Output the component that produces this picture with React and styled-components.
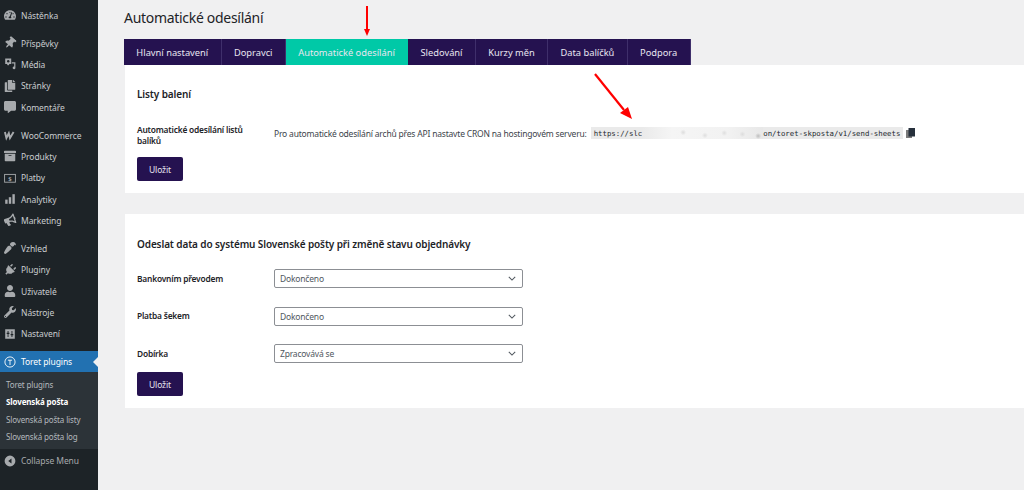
import React from "react";
import styled, { createGlobalStyle } from "styled-components";
import {
  FaTachometerAlt,
  FaThumbtack,
  FaCopy,
  FaCommentAlt,
  FaArchive,
  FaBullhorn,
  FaPaintBrush,
  FaPlug,
  FaUser,
  FaWrench,
} from "react-icons/fa";

const MediaIcon = () => (
  <svg viewBox="0 0 20 20" fill="currentColor">
    <path d="M2 1h10v9H9l-1 2H6l-1-2H2z" />
    <circle cx="7" cy="5.500" r="2" fill="#1d2327" />
    <path d="M13 7h6v9.500a2.300 2.300 0 1 1-2-2.300V9h-4z" />
  </svg>
);

const WooIcon = () => (
  <svg viewBox="0 0 20 20" fill="none" stroke="currentColor" strokeWidth="3.200">
    <path d="M1.500 5l2.500 10 4-8 2 8 6-10" />
  </svg>
);

const PayIcon = () => (
  <svg viewBox="0 0 20 20" fill="none">
    <rect x="1" y="4" width="18" height="13" stroke="currentColor" strokeWidth="1.500" />
    <text x="10" y="14.500" fontSize="10" fontFamily="Noto Sans" fontWeight="700" fill="currentColor" textAnchor="middle">$</text>
  </svg>
);

const BarsIcon = () => (
  <svg viewBox="0 0 20 20" fill="currentColor">
    <rect x="2" y="11" width="4" height="7" />
    <rect x="8" y="7" width="4" height="11" />
    <rect x="14" y="2" width="4" height="16" />
  </svg>
);

const SlidersIcon = () => (
  <svg viewBox="0 0 20 20" fill="currentColor">
    <path fillRule="evenodd" d="M2 2h16v16H2zM6 5v3H4.500v2H6v5h1.500v-5H9V8H7.500V5zM12.500 5v5H11v2h1.500v3H14v-3h1.500v-2H14V5z" />
  </svg>
);

const ToretIcon = () => (
  <svg viewBox="0 0 20 20" fill="none" stroke="#fff" strokeWidth="1.500">
    <circle cx="10" cy="10" r="8.500" />
    <path d="M6.500 7h7M10 7v8" />
  </svg>
);

const CollapseIcon = () => (
  <svg viewBox="0 0 20 20" fill="currentColor">
    <path fillRule="evenodd" d="M10 1a9 9 0 1 1 0 18 9 9 0 0 1 0-18zM12.500 6L7 10l5.500 4z" />
  </svg>
);

const CopyIcon = () => (
  <svg viewBox="0 0 9 10" width="9" height="10">
    <rect x="0" y="2" width="6" height="8" fill="#7b7b7b" />
    <rect x="2.500" y="0" width="6.500" height="8.500" fill="#27303c" />
  </svg>
);

const menuGroups = [
  [{ label: "Nástěnka", icon: <FaTachometerAlt /> }],
  [
    { label: "Příspěvky", icon: <FaThumbtack style={{ transform: "rotate(40deg)" }} /> },
    { label: "Média", icon: <MediaIcon /> },
    { label: "Stránky", icon: <FaCopy /> },
    { label: "Komentáře", icon: <FaCommentAlt /> },
  ],
  [
    { label: "WooCommerce", icon: <WooIcon /> },
    { label: "Produkty", icon: <FaArchive /> },
    { label: "Platby", icon: <PayIcon /> },
    { label: "Analytiky", icon: <BarsIcon /> },
    { label: "Marketing", icon: <FaBullhorn style={{ transform: "rotate(-18deg)" }} /> },
  ],
  [
    { label: "Vzhled", icon: <FaPaintBrush style={{ transform: "rotate(180deg)" }} /> },
    { label: "Pluginy", icon: <FaPlug style={{ transform: "rotate(45deg)" }} /> },
    { label: "Uživatelé", icon: <FaUser /> },
    { label: "Nástroje", icon: <FaWrench /> },
    { label: "Nastavení", icon: <SlidersIcon /> },
  ],
];

const tabs = [
  "Hlavní nastavení",
  "Dopravci",
  "Automatické odesílání",
  "Sledování",
  "Kurzy měn",
  "Data balíčků",
  "Podpora",
];

const statusRows = [
  { label: "Bankovním převodem", value: "Dokončeno" },
  { label: "Platba šekem", value: "Dokončeno" },
  { label: "Dobírka", value: "Zpracovává se" },
];

function App() {
  return (
    <>
      <GlobalStyle />
      <Page>
        <Sidebar>
          {menuGroups.map((group, i) => (
            <MenuGroup key={i}>
              {group.map((item) => (
                <MenuItem key={item.label}>
                  <MenuIcon>{item.icon}</MenuIcon>
                  {item.label}
                </MenuItem>
              ))}
            </MenuGroup>
          ))}
          <CurrentItem>
            <MenuIcon>
              <ToretIcon />
            </MenuIcon>
            Toret plugins
          </CurrentItem>
          <Submenu>
            <SubItem>Toret plugins</SubItem>
            <SubItem $active>Slovenská pošta</SubItem>
            <SubItem>Slovenská pošta listy</SubItem>
            <SubItem>Slovenská pošta log</SubItem>
          </Submenu>
          <CollapseRow>
            <MenuIcon>
              <CollapseIcon />
            </MenuIcon>
            Collapse Menu
          </CollapseRow>
        </Sidebar>

        <Content>
          <Title>Automatické odesílání</Title>
          <TabBar>
            {tabs.map((tab) => (
              <Tab key={tab} $active={tab === "Automatické odesílání"}>
                {tab}
              </Tab>
            ))}
          </TabBar>

          <FirstCard>
            <CardTitle>Listy balení</CardTitle>
            <CronRow>
              <CronLabel>Automatické odesílání listů balíků</CronLabel>
              <CronText>
                Pro automatické odesílání archů přes API nastavte CRON na hostingovém serveru:
              </CronText>
              <UrlCode>
                https://slc
                <Blurred />
                on/toret-skposta/v1/send-sheets
              </UrlCode>
              <CopyButton>
                <CopyIcon />
              </CopyButton>
            </CronRow>
            <SaveButton>Uložit</SaveButton>
          </FirstCard>

          <SecondCard>
            <WideTitle>Odeslat data do systému Slovenské pošty při změně stavu objednávky</WideTitle>
            {statusRows.map((row) => (
              <FormRow key={row.label}>
                <RowLabel>{row.label}</RowLabel>
                <SelectBox>
                  {row.value}
                  <svg width="8" height="5" viewBox="0 0 10 6" fill="none" stroke="#50575e" strokeWidth="1.300">
                    <path d="M1 1l4 4 4-4" />
                  </svg>
                </SelectBox>
              </FormRow>
            ))}
            <SaveButton>Uložit</SaveButton>
          </SecondCard>
        </Content>

        <TopArrow viewBox="0 0 6 30" width="6" height="30">
          <path d="M3 0v24" stroke="#f00" strokeWidth="2" />
          <path d="M0 23h6L3 30z" fill="#f00" />
        </TopArrow>
        <UrlArrow viewBox="0 0 40 48" width="40" height="48">
          <path d="M1 1l29 36" stroke="#f00" strokeWidth="2.200" />
          <path d="M26 40l8-6 4 12z" fill="#f00" />
        </UrlArrow>
      </Page>
    </>
  );
}

export default App;

const GlobalStyle = createGlobalStyle`
  html, body {
    margin: 0;
    padding: 0;
    background: #f0f0f1;
  }
  * {
    box-sizing: border-box;
  }
`;

const Page = styled.div`
  position: relative;
  width: 1024px;
  height: 490px;
  display: flex;
  overflow: hidden;
  background: #f0f0f1;
  font-family: "Noto Sans", "Open Sans", sans-serif;
  color: #3c434a;
`;

const Sidebar = styled.nav`
  width: 98px;
  flex: none;
  background: #1d2327;
  padding-top: 4.500px;
  font-size: 8.500px;
  letter-spacing: -0.08px;
`;

const MenuGroup = styled.div`
  margin-bottom: 6.670px;
`;

const MenuItem = styled.div`
  height: 21.330px;
  display: flex;
  align-items: center;
  color: #c9cccf;
  white-space: nowrap;
`;

const MenuIcon = styled.span`
  width: 21px;
  padding-left: 4px;
  flex: none;
  display: flex;
  align-items: center;
  color: #a7aaad;

  svg {
    width: 12px;
    height: 12px;
  }
`;

const CurrentItem = styled(MenuItem)`
  position: relative;
  background: #2271b1;
  color: #fff;

  &::after {
    content: "";
    position: absolute;
    right: 0;
    top: 6px;
    border: 5px solid transparent;
    border-right-color: #f0f0f1;
    border-left: 0;
  }
`;

const Submenu = styled.div`
  background: #2c3338;
  height: 77px;
  padding-top: 3px;
`;

const SubItem = styled.div`
  height: 17.600px;
  padding-left: 6px;
  display: flex;
  align-items: center;
  font-size: 8px;
  letter-spacing: -0.14px;
  white-space: nowrap;
  color: ${(p) => (p.$active ? "#fff" : "#b4b9be")};
  font-weight: ${(p) => (p.$active ? 700 : 400)};
`;

const CollapseRow = styled(MenuItem)`
  color: #a7aaad;
  padding-top: 1px;
`;

const Content = styled.main`
  flex: 1;
  min-width: 0;
  padding: 8px 0 0 26px;
`;

const Title = styled.h1`
  margin: 0 0 11px;
  height: 20px;
  font-size: 14px;
  line-height: 20px;
  letter-spacing: -0.3px;
  font-weight: 400;
  color: #1d2327;
`;

const TabBar = styled.div`
  display: flex;
  height: 26px;
`;

const Tab = styled.div`
  padding: 0 12.350px;
  display: flex;
  align-items: center;
  font-size: 9.300px;
  white-space: nowrap;
  color: #e8e6f0;
  background: ${(p) => (p.$active ? "#00c9a7" : "#251250")};
  border-right: 1px solid ${(p) => (p.$active ? "#00c9a7" : "#3f2f6b")};
`;

const Card = styled.section`
  margin-left: 1px;
  background: #fff;
  padding: 0 12px;
`;

const FirstCard = styled(Card)`
  height: 128px;
  padding-top: 21px;
  margin-bottom: 21px;
`;

const SecondCard = styled(Card)`
  height: 194px;
  padding-top: 22px;
`;

const CardTitle = styled.h2`
  margin: 0;
  height: 16px;
  line-height: 16px;
  font-size: 10px;
  letter-spacing: -0.12px;
  font-weight: 600;
  color: #1d2327;
`;

const WideTitle = styled(CardTitle)`
  margin-bottom: 17px;
`;

const CronRow = styled.div`
  display: flex;
  align-items: center;
  margin: 16px 0 9px;
  min-height: 30px;
`;

const RowLabel = styled.div`
  width: 137px;
  flex: none;
  font-size: 8.400px;
  letter-spacing: -0.2px;
  line-height: 11.500px;
  font-weight: 600;
  color: #1d2327;
`;

const CronLabel = styled(RowLabel)`
  padding: 4px 20px 0 0;
`;

const CronText = styled.span`
  font-size: 8.500px;
  letter-spacing: -0.19px;
  color: #3c434a;
  white-space: nowrap;
`;

const UrlCode = styled.code`
  display: inline-flex;
  align-items: center;
  height: 12px;
  margin-left: 4px;
  padding: 0 3px;
  background: #eaeaea;
  font-family: "DejaVu Sans Mono", "Liberation Mono", monospace;
  font-size: 7.350px;
  color: #23282d;
  white-space: nowrap;
`;

const Blurred = styled.span`
  display: inline-block;
  width: 121px;
  height: 12px;
  background:
    radial-gradient(circle at 34% 45%, #dcdcdc, transparent 3px),
    radial-gradient(circle at 52% 70%, #dedede, transparent 3px),
    radial-gradient(circle at 68% 50%, #dedede, transparent 3px),
    radial-gradient(circle at 83% 60%, #dcdcdc, transparent 3px),
    radial-gradient(circle at 96% 75%, #bdbdbd, transparent 3px),
    linear-gradient(90deg, #eaeaea, #f5f5f5 25%, #f2f2f2 70%, #e8e8e8);
`;

const CopyButton = styled.span`
  display: inline-flex;
  margin-left: 3px;
`;

const SaveButton = styled.div`
  width: 46px;
  height: 24px;
  display: flex;
  align-items: center;
  justify-content: center;
  background: #251250;
  border-radius: 2px;
  color: #e8e6f0;
  font-size: 8.500px;
  letter-spacing: -0.1px;
`;

const FormRow = styled.div`
  display: flex;
  align-items: center;
  height: 19px;
  margin-bottom: 18.500px;

  &:nth-of-type(3) {
    margin-bottom: 9px;
  }
`;

const SelectBox = styled.div`
  width: 249px;
  height: 19px;
  padding: 0 6px 0 5px;
  display: flex;
  align-items: center;
  justify-content: space-between;
  background: #fff;
  border: 1px solid #8c8f94;
  border-radius: 2px;
  font-size: 8.500px;
  letter-spacing: -0.19px;
  color: #50575e;
`;

const TopArrow = styled.svg`
  position: absolute;
  left: 364px;
  top: 6px;
`;

const UrlArrow = styled.svg`
  position: absolute;
  left: 594px;
  top: 73px;
`;
